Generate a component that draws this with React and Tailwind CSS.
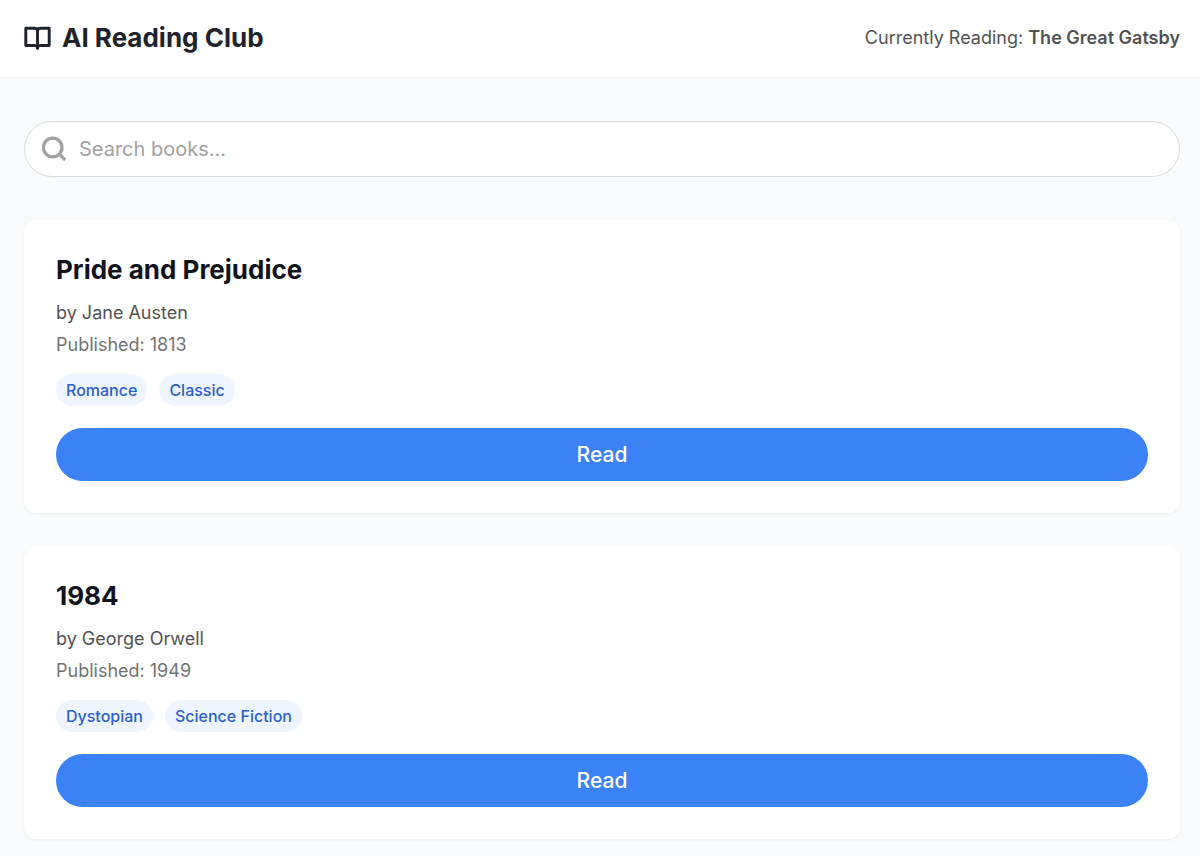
import { useState } from 'react'

const BOOKS = [
  { title: 'Pride and Prejudice', author: 'Jane Austen', year: 1813, genres: ['Romance', 'Classic'] },
  { title: '1984', author: 'George Orwell', year: 1949, genres: ['Dystopian', 'Science Fiction'] },
]

function BookIcon() {
  return (
    <svg
      width="28"
      height="28"
      viewBox="0 0 28 28"
      fill="none"
      stroke="currentColor"
      strokeWidth="2.9"
      strokeLinejoin="round"
      strokeLinecap="round"
      aria-hidden="true"
    >
      <path d="M13.500 5.800C13 4.800 12 4.300 10.500 4.300H1.800v17.200h8.700c1.500 0 2.500.4 3 1.300.5-.9 1.500-1.300 3-1.300h8.700V4.300h-8.700c-1.500 0-2.500.5-3 1.500Z" />
      <path d="M13.500 6v18.500" />
    </svg>
  )
}

function SearchIcon() {
  return (
    <svg
      width="28"
      height="28"
      viewBox="0 0 28 28"
      fill="none"
      stroke="currentColor"
      strokeWidth="3.2"
      aria-hidden="true"
    >
      <circle cx="11.700" cy="12.500" r="9.300" />
      <path d="m18.200 19 6 6" />
    </svg>
  )
}

function BookCard({ book }) {
  return (
    <article className="bg-white rounded-xl shadow-[0_1px_3px_rgba(0,0,0,0.06)] p-8">
      <h2 className="text-[26px] leading-9 font-bold text-[#11131d]">{book.title}</h2>
      <p className="mt-[9px] text-[18px] leading-8 text-neutral-600">by {book.author}</p>
      <p className="text-[18px] leading-8 text-neutral-500">Published: {book.year}</p>
      <div className="mt-[13px] flex flex-wrap gap-3">
        {book.genres.map((genre) => (
          <span
            key={genre}
            className="px-2.5 rounded-full bg-[#eff5fe] text-[16px] leading-8 font-medium text-[#2b5fcb]"
          >
            {genre}
          </span>
        ))}
      </div>
      <button
        type="button"
        className="mt-[22px] w-full h-[53px] rounded-full bg-[#3b82f6] text-[21px] font-medium text-white hover:bg-blue-600"
      >
        Read
      </button>
    </article>
  )
}

export default function App() {
  const [query, setQuery] = useState('')

  const books = BOOKS.filter((b) => b.title.toLowerCase().includes(query.toLowerCase()))

  return (
    <div className="min-h-screen bg-[#f9fafb] font-['Inter',sans-serif]">
      <header className="flex items-center justify-between bg-white border-b border-[#eceeef] pl-6 pr-5 pt-[22px] pb-[23px]">
        <div className="flex items-center gap-2.5 text-[#1e232d]">
          <BookIcon />
          <h1 className="text-[26px] leading-8 font-bold">AI Reading Club</h1>
        </div>
        <p className="text-[18px] leading-8 text-neutral-600">
          Currently Reading: <span className="font-semibold">The Great Gatsby</span>
        </p>
      </header>

      <main className="pl-6 pr-5 pt-[43px] pb-4">
        <label className="flex h-14 items-center gap-2.5 rounded-full border border-[#d8dbdf] bg-white px-4 text-neutral-400">
          <SearchIcon />
          <input
            type="text"
            aria-label="Search books"
            placeholder="Search books..."
            value={query}
            onChange={(e) => setQuery(e.target.value)}
            className="flex-1 min-w-0 bg-transparent text-[20px] text-gray-900 placeholder:text-neutral-400 outline-none"
          />
        </label>

        <div className="mt-[43px] flex flex-col gap-[33px]">
          {books.map((book) => (
            <BookCard key={book.title} book={book} />
          ))}
        </div>
      </main>
    </div>
  )
}
